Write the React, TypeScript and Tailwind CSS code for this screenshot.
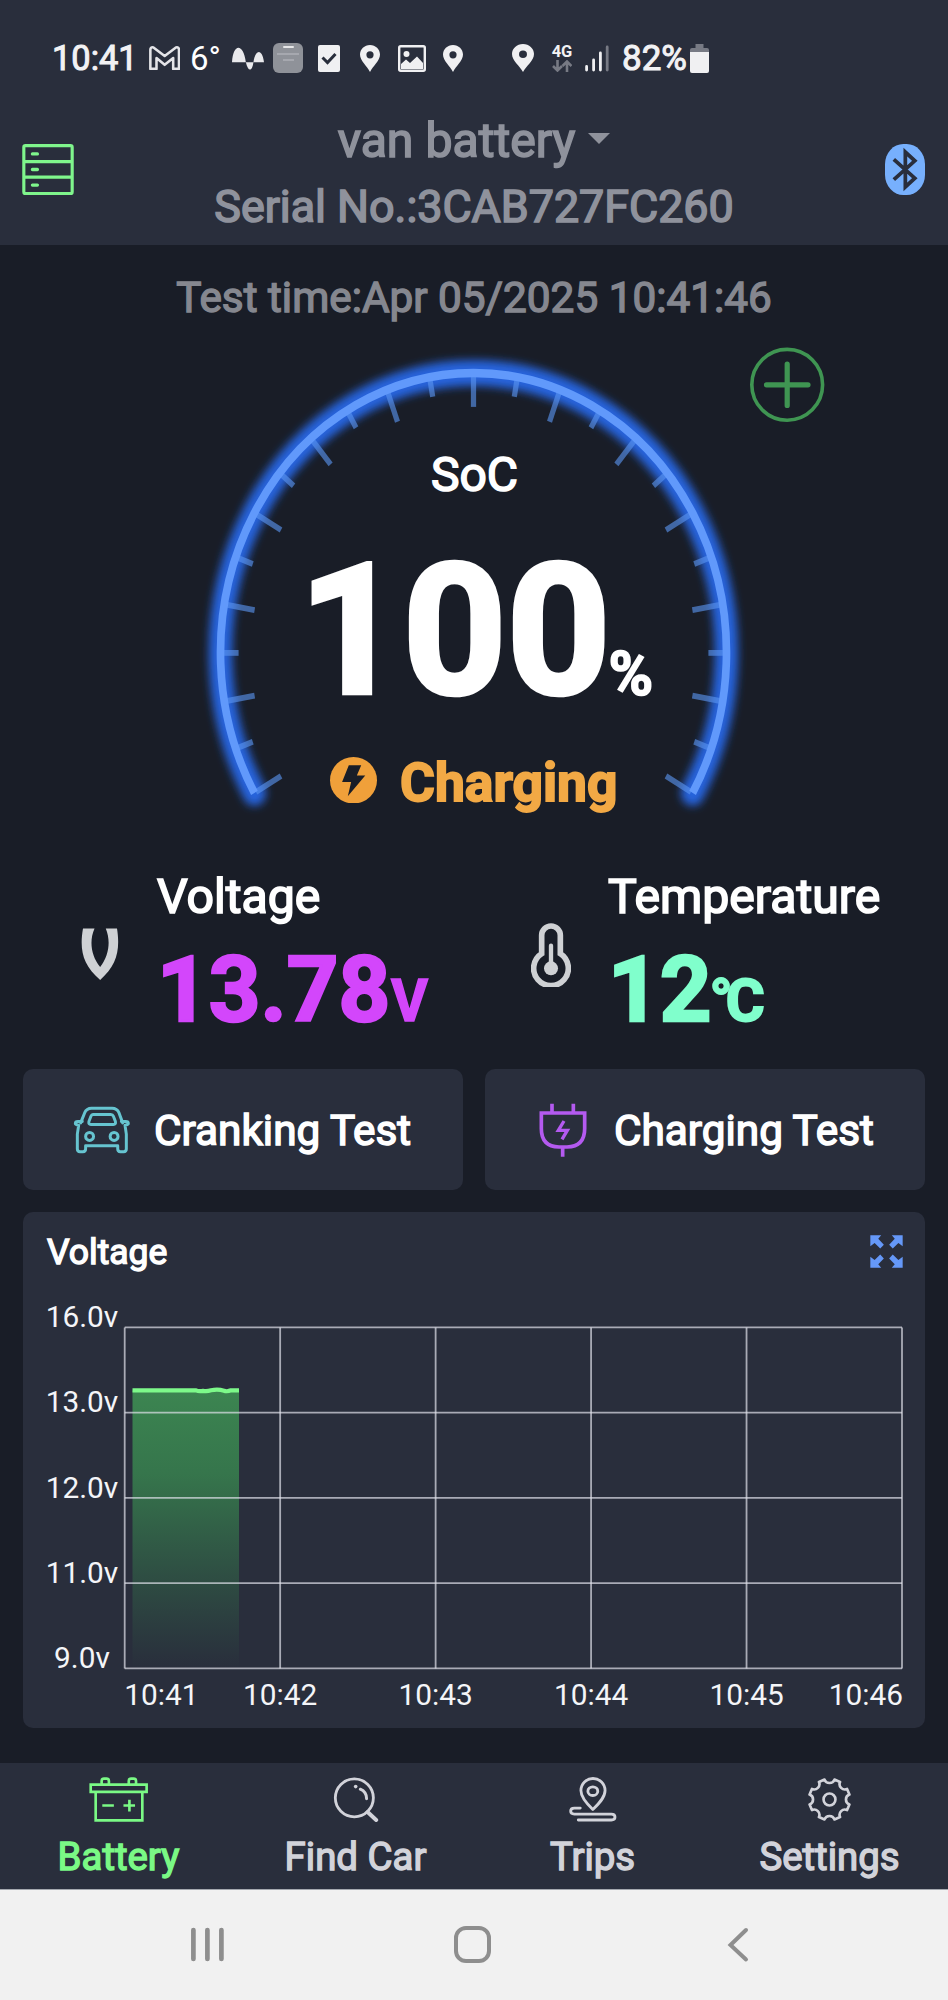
import React from 'react';

const Y_LABELS = ['16.0v', '13.0v', '12.0v', '11.0v', '9.0v'];
const X_LABELS = ['10:41', '10:42', '10:43', '10:44', '10:45', '10:46'];

const CHART = { left: 124.7, right: 902, top: 1327.4, bottom: 1668.4 };

// Angles in degrees, 0 is straight up
const TICKS = Array.from({ length: 25 }, (_, i) => ({ angle: -120 + i * 10, long: i % 2 === 0 }));

function polar(cx: number, cy: number, r: number, deg: number) {
  const a = (deg * Math.PI) / 180;
  return `${(cx + r * Math.sin(a)).toFixed(2)} ${(cy - r * Math.cos(a)).toFixed(2)}`;
}

function gearPath(cx: number, cy: number, r: number) {
  let d = '';
  for (let k = 0; k < 8; k++) {
    const a = k * 45;
    d += `${k === 0 ? 'M' : 'L'}${polar(cx, cy, r, a - 14)} A16 16 0 0 0 ${polar(cx, cy, r, a + 14)} `;
  }
  return d + 'Z';
}

function Pin({ className }: { className: string }) {
  return (
    <svg viewBox="0 0 20 27" preserveAspectRatio="none" className={className} fill="#f0f0f2">
      <path fillRule="evenodd" d="M10 0C4.4 0 0 4.3 0 9.6C0 16 7 21 10 27C13 21 20 16 20 9.6C20 4.3 15.6 0 10 0ZM10 6.2A3.6 3.6 0 1 1 10 13.4A3.6 3.6 0 1 1 10 6.2Z" />
    </svg>
  );
}

function StatusBar() {
  return (
    <div className="flex h-[94px] items-center pt-[22px] pl-[52px] text-[35px] leading-none text-[#f2f2f4]">
      <span className="w-[97px] text-[34.4px] [-webkit-text-stroke:1px]">10:41</span>
      <svg viewBox="448 75 91 70" className="h-[24px] w-[31px]" fill="none" stroke="#e4e4e8" strokeWidth="7.5" strokeLinejoin="round">
        <path d="M452 142V86Q452 77 461 79L494 104L527 79Q536 77 536 86V142H519V110L494 130L470 110V142Z" />
      </svg>
      <span className="ml-[10px] w-[42px] text-[33px] font-normal text-white">6°</span>
      <svg viewBox="693 78 97 68" className="h-[23px] w-[32px]" fill="#e9e9ec">
        <path d="M693 123C697 65 727 65 735 123ZM735 123H758C754 153 742 153 735 123ZM758 123C764 82 785 82 790 123Z" />
      </svg>
      <div className="ml-[9px] flex h-[30px] w-[30px] flex-col items-center rounded-md bg-[#8f9299] pt-[3px]">
        <div className="h-[2px] w-[11px] rounded bg-[#e6e6e8]" />
        <div className="mt-[5px] h-[2px] w-[22px] bg-[#a6a8af]" />
        <div className="mt-[4px] h-[2px] w-[11px] bg-[#a6a8af]" />
      </div>
      <svg viewBox="0 0 22 27" className="ml-[15px] h-[27px] w-[22px]">
        <rect width="22" height="27" rx="2" fill="#f0f0f2" />
        <path d="M4.5 12.5L9.5 17.5L17.5 9" fill="none" stroke="#292e3c" strokeWidth="3" />
      </svg>
      <Pin className="ml-[20px] h-[27px] w-[20px]" />
      <svg viewBox="0 0 28 27" className="ml-[18px] h-[27px] w-[28px]">
        <rect x="1.2" y="1.2" width="25.6" height="24.6" rx="1.5" fill="none" stroke="#f0f0f2" strokeWidth="2.4" />
        <circle cx="8.5" cy="9" r="3" fill="#f0f0f2" />
        <path d="M3 19L8 14.5L12 18L19 11.5L25 18V24H3Z" fill="#f0f0f2" />
      </svg>
      <Pin className="ml-[17px] h-[27px] w-[20px]" />
      <Pin className="ml-[49px] h-[28px] w-[22px]" />
      <div className="ml-[17px] flex w-[22px] flex-col items-center">
        <span className="text-[16.5px] font-bold">4G</span>
        <svg viewBox="0 0 20 12" className="h-[12px] w-[20px]" fill="none" stroke="#777a84" strokeWidth="2.6">
          <path d="M5.5 0V10M1 6L5.5 10.5L10 6M15 12V2M10.5 6L15 1.5L19.5 6" />
        </svg>
      </div>
      <svg viewBox="0 0 24 27" className="ml-[12px] h-[27px] w-[24px]" strokeWidth="2.8" strokeLinecap="round">
        <path d="M1.6 21.5V25M8.6 15V25M15.4 8V25" stroke="#f0f0f2" />
        <path d="M22.2 2V25" stroke="#777a84" />
      </svg>
      <span className="ml-[13px] w-[68px] [-webkit-text-stroke:1px]">82%</span>
      <svg viewBox="0 0 19 29" className="h-[29px] w-[19px]">
        <path d="M5.5 0H13.5V4H17Q19 4 19 6V9H0V6Q0 4 2 4H5.5Z" fill="#777a84" />
        <path d="M0 8H19V27Q19 29 17 29H2Q0 29 0 27Z" fill="#f0f0f2" />
      </svg>
    </div>
  );
}

function Header() {
  return (
    <header className="h-[245px] bg-[#292e3c]">
      <StatusBar />
      <div className="flex h-[151px] items-center justify-between pr-[23px] pl-[22px]">
        <svg viewBox="67 371 156 154" className="h-[51px] w-[52px]" fill="none" stroke="#7ff58c" strokeWidth="9.5">
          <rect x="72" y="376" width="146" height="145" rx="5" />
          <path d="M72 424H218M72 471H218" />
          <path d="M98 401H113M98 448H113M98 495H113" strokeWidth="10" strokeLinecap="round" />
        </svg>
        <div className="flex flex-col items-center pt-[9px] pr-[11px] text-[#8f929c]">
          <div className="flex h-[66px] items-center gap-[13px]">
            <span className="text-[48.2px] leading-none [-webkit-text-stroke:1.6px]">van battery</span>
            <svg viewBox="0 0 22 11" className="mb-[6px] h-[11px] w-[22px]" fill="currentColor">
              <path d="M0 0H22L11 11Z" />
            </svg>
          </div>
          <div className="flex h-[66px] items-center">
            <span className="text-[44.8px] leading-none [-webkit-text-stroke:1.6px]">Serial No.:3CAB727FC260</span>
          </div>
        </div>
        <svg viewBox="1234 372 118 152" preserveAspectRatio="none" className="h-[51px] w-[40px]">
          <rect x="1234" y="372" width="118" height="152" rx="54" ry="60" fill="#77b0fd" />
          <path d="M1260 418L1322 474L1294 500V396L1322 422L1260 478" fill="none" stroke="#292e3c" strokeWidth="11" />
        </svg>
      </div>
    </header>
  );
}

function Gauge() {
  const arc = `M${polar(0, 0, 280, -120)} A280 280 0 1 1 ${polar(0, 0, 280, 120)}`;
  return (
    <section className="grid h-[500px]">
      <svg viewBox="0 346 948 500" className="col-start-1 row-start-1 h-[500px] w-[948px] overflow-visible" fill="none">
        <defs>
          <filter id="glow" x="-20%" y="-20%" width="140%" height="140%">
            <feGaussianBlur stdDeviation="4.5" />
          </filter>
        </defs>
        <g transform="translate(473.5 652.9) scale(0.9035 1)">
          <path d={arc} stroke="#2563dc" strokeWidth="26" strokeLinecap="round" filter="url(#glow)" />
          {TICKS.map((t) => (
            <path
              key={t.angle}
              d={`M${polar(0, 0, 278, t.angle)} L${polar(0, 0, t.long ? 246 : 260, t.angle)}`}
              stroke="#5b95f0"
              strokeOpacity="0.62"
              strokeWidth="5.8"
            />
          ))}
          <path d={arc} stroke="#6199fb" strokeWidth="8.5" />
        </g>
        <g stroke="#3f9552" strokeLinecap="round">
          <circle cx="787.2" cy="384.8" r="35.4" strokeWidth="3.6" />
          <path d="M766.5 384.8H808M787.2 364.2V405.5" strokeWidth="5.2" />
        </g>
      </svg>
      <div className="col-start-1 row-start-1 flex flex-col pt-[99px]">
        <div className="flex h-[60px] items-center justify-center">
          <span className="pl-px text-[48px] leading-none text-white [-webkit-text-stroke:1.6px]">SoC</span>
        </div>
        <div className="mt-[31px] flex h-[190px] items-baseline pl-[299px] font-bold text-white">
          <span className="text-[181px] leading-[190px] [-webkit-text-stroke:4.5px]">100</span>
          <span className="-ml-[2px] translate-y-[2px] text-[60.5px] leading-none [-webkit-text-stroke:1.6px]">%</span>
        </div>
        <div className="mt-[31px] flex h-[50px] items-center pl-[330px]">
          <svg viewBox="510 1390 140 130" preserveAspectRatio="none" className="mb-[4px] h-[46.5px] w-[47px]">
            <ellipse cx="580" cy="1455" rx="70" ry="65" fill="#f0a03a" />
            <path d="M566 1413H603L590 1442H615L563 1500L573 1460H546Z" fill="#191d27" />
          </svg>
          <span className="mt-[2px] ml-[23px] text-[53.4px] leading-none font-bold text-[#f2a945] [-webkit-text-stroke:1.8px]">Charging</span>
        </div>
      </div>
    </section>
  );
}

function Readings() {
  return (
    <section className="grid h-[223px] grid-cols-2 px-[23px]">
      <div className="flex">
        <div className="flex w-[134px] justify-center pt-[82px] pl-5">
          <svg viewBox="243 233 115 157" className="h-[52px] w-[38px]" fill="#cfd1d4">
            <path d="M249 234H284C268 270 272 315 301 351C329 315 333 270 318 234H352C362 300 352 345 301 390C248 345 238 300 249 234Z" />
          </svg>
        </div>
        <div className="pt-[24px]">
          <div className="flex h-[54px] items-center text-white">
            <span className="text-[48.2px] leading-none [-webkit-text-stroke:1.7px]">Voltage</span>
          </div>
          <div className="mt-[21px] flex h-[90px] items-baseline font-bold text-[#d346fb]">
            <span className="text-[90.2px] leading-[90px] [-webkit-text-stroke:2.6px]">13.78</span>
            <span className="ml-[1px] origin-left scale-x-[0.96] text-[59px] leading-none [-webkit-text-stroke:1.5px]">V</span>
          </div>
        </div>
      </div>
      <div className="flex">
        <div className="flex w-[134px] justify-center pt-[77px] pl-5">
          <svg viewBox="172 218 120 192" className="h-[64px] w-[40px]" fill="none" stroke="#cfd1d4">
            <path d="M204 310V255A28 28 0 0 1 260 255V310A52 52 0 1 1 204 310Z" strokeWidth="17" />
            <path d="M232 286V340" strokeWidth="13" strokeLinecap="round" />
            <circle cx="232" cy="354" r="21" fill="#cfd1d4" stroke="none" />
          </svg>
        </div>
        <div className="pt-[24px]">
          <div className="flex h-[54px] items-center text-white">
            <span className="text-[48.2px] leading-none [-webkit-text-stroke:1.7px]">Temperature</span>
          </div>
          <div className="mt-[21px] flex h-[90px] items-baseline font-bold text-[#80ffcc]">
            <span className="text-[90.2px] leading-[90px] [-webkit-text-stroke:2.6px]">12</span>
            <span className="-ml-[2px] text-[59.5px] leading-none tracking-[-7px] [-webkit-text-stroke:2px]">°C</span>
          </div>
        </div>
      </div>
    </section>
  );
}

function Actions() {
  return (
    <section className="grid grid-cols-2 gap-[22px] px-[23px] text-white">
      <div className="flex h-[121px] items-center rounded-[10px] bg-[#292e3c] pl-[50px]">
        <svg viewBox="40 75 175 145" className="h-[48px] w-[58px]" fill="none" stroke="#66c4d0" strokeWidth="9" strokeLinecap="round" strokeLinejoin="round">
          <path d="M63 126L75 96Q81 82 96 82H158Q173 82 179 96L190 126" />
          <path d="M68 122H55Q47 122 47 128Q47 132 57 133L53 160V205Q53 213 61 213H70Q78 213 78 205V195H175V205Q175 213 183 213H193Q201 213 201 205V160L197 133Q207 132 207 128Q207 122 199 122H186" />
          <path d="M100 101H154Q160 101 162 106L168 122Q170 131 162 131H94Q86 131 88 122L94 106Q96 101 100 101Z" />
          <circle cx="90" cy="167" r="12" />
          <circle cx="164" cy="167" r="12" />
        </svg>
        <span className="mt-[4px] ml-[23px] text-[42.3px] leading-none [-webkit-text-stroke:1.5px]">Cranking Test</span>
      </div>
      <div className="flex h-[121px] items-center rounded-[10px] bg-[#292e3c] pl-[54px]">
        <svg viewBox="196 758 144 162" className="h-[54px] w-[48px]" fill="none" stroke="#b45af0" strokeWidth="11">
          <path d="M235 760V788M299 760V788M203 788H333V835Q333 888 280 890H256Q203 888 203 835ZM267 890V919" />
          <path d="M271 812L254 840H281L265 867" strokeWidth="10" />
        </svg>
        <span className="mt-[4px] ml-[27px] text-[42.3px] leading-none [-webkit-text-stroke:1.5px]">Charging Test</span>
      </div>
    </section>
  );
}

function ExpandIcon() {
  const arrow = 'M-49 -47H-16L-25 -37L-8 -20L-19 -9L-36 -25L-49 -15Z';
  return (
    <svg viewBox="-50 -48 100 96" preserveAspectRatio="none" className="mb-[2px] h-[33px] w-[33px]" fill="#6598f8">
      <path d={arrow} />
      <path d={arrow} transform="scale(-1 1)" />
      <path d={arrow} transform="scale(1 -1)" />
      <path d={arrow} transform="scale(-1 -1)" />
    </svg>
  );
}

function VoltageChart() {
  const { left, right, top, bottom } = CHART;
  const rowH = (bottom - top) / 4;
  const colW = (right - left) / 5;
  return (
    <section className="mx-[23px] mt-[22px] h-[516px] rounded-[10px] bg-[#292e3c]">
      <div className="flex h-[78px] items-center justify-between pt-[2px] pr-[22px] pl-[24px]">
        <span className="mt-[2px] text-[35.5px] leading-none text-white [-webkit-text-stroke:1.4px]">Voltage</span>
        <ExpandIcon />
      </div>
      <svg viewBox="23 1290 902 438" className="h-[438px] w-[902px]">
        <defs>
          <linearGradient id="area" x1="0" y1="0" x2="0" y2="1">
            <stop offset="0" stopColor="#4fdc66" stopOpacity="0.5" />
            <stop offset="0.3" stopColor="#46d060" stopOpacity="0.44" />
            <stop offset="1" stopColor="#3fc05a" stopOpacity="0" />
          </linearGradient>
        </defs>
        <path d={`M132.5 1390.4H239V${bottom}H132.5Z`} fill="url(#area)" />
        <g stroke="#dfe1ea" strokeOpacity="0.7" strokeWidth="1.8">
          {Y_LABELS.map((l, i) => (
            <line key={l} x1={left} x2={right} y1={top + i * rowH} y2={top + i * rowH} />
          ))}
          {X_LABELS.map((l, i) => (
            <line key={l} x1={left + i * colW} x2={left + i * colW} y1={top} y2={bottom} />
          ))}
        </g>
        <path d="M132.5 1390.4H196Q199 1391.7 203 1390.9Q207 1391.7 211 1390.3Q218 1388.9 224 1390.7Q227 1392 231 1390.3H239" fill="none" stroke="#7df98a" strokeWidth="4.2" />
        <g fill="#f4f5f8" fontSize="29.8">
          {Y_LABELS.map((l, i) => (
            <text key={l} x="82" y={top + i * rowH - 0.3} textAnchor="middle">{l}</text>
          ))}
          {X_LABELS.map((l, i) => (
            <text
              key={l}
              x={i === 0 ? left - 0.5 : i === 5 ? right + 1 : left + i * colW}
              y="1704.8"
              textAnchor={i === 0 ? 'start' : i === 5 ? 'end' : 'middle'}
            >
              {l}
            </text>
          ))}
        </g>
      </svg>
    </section>
  );
}

function Tab({ label, active, children }: { label: string; active?: boolean; children: React.ReactNode }) {
  return (
    <div className={`flex flex-col items-center pt-[14px] ${active ? 'text-[#7af985]' : 'text-[#d2d3da]'}`}>
      {children}
      <span className="mt-[15px] text-[38.4px] leading-[40px] [-webkit-text-stroke:1.4px]">{label}</span>
    </div>
  );
}

function TabBar() {
  return (
    <nav className="mt-[35px] grid h-[126px] grid-cols-4 bg-[#292e3c]">
      <Tab label="Battery" active>
        <svg viewBox="266 82 178 136" className="h-[45px] w-[59px]" fill="none" stroke="currentColor" strokeWidth="8">
          <path d="M271 105H440V127H271ZM286 127V213H427V127M304 105V94Q304 87 311 87H319Q326 87 326 94V105M386 105V94Q386 87 393 87H401Q408 87 408 94V105M306 168H341M370 168H405M388 151V186" />
        </svg>
      </Tab>
      <Tab label="Find Car">
        <svg viewBox="998 82 138 136" className="h-[45px] w-[46px]" fill="none" stroke="currentColor" strokeWidth="8.5" strokeLinecap="round">
          <circle cx="1062" cy="145" r="57.5" />
          <path d="M1102 188L1128 212" strokeWidth="12" />
          <path d="M1080 119Q1099 127 1099 148" strokeWidth="9" />
          <circle cx="1066" cy="111" r="5.5" fill="currentColor" stroke="none" />
        </svg>
      </Tab>
      <Tab label="Trips">
        <svg viewBox="282 82 146 136" className="h-[45px] w-[49px]" fill="none" stroke="currentColor" strokeWidth="8.5" strokeLinecap="round" strokeLinejoin="round">
          <path d="M356 180C340 165 320 145 320 123A36.5 36.5 0 0 1 393 123C393 145 372 165 356 180Z" />
          <ellipse cx="356" cy="125" rx="15" ry="13" />
          <path d="M318 176H300Q289 176 289 185Q289 194 300 194H412Q423 194 423 203Q423 212 412 212H312" />
        </svg>
      </Tab>
      <Tab label="Settings">
        <svg viewBox="1000 83 136 136" className="h-[45px] w-[45px]" fill="none" stroke="currentColor" strokeWidth="8" strokeLinejoin="round">
          <path d={gearPath(1068, 151, 62)} />
          <circle cx="1068" cy="151" r="18" />
        </svg>
      </Tab>
    </nav>
  );
}

function SystemNav() {
  return (
    <div className="flex h-[111px] items-start border-t border-[#a3a7ae] bg-[#f1f1f1] pt-[36px] pl-[191px]">
      <svg viewBox="0 0 33 37" className="h-[37px] w-[33px]" stroke="#8e8e8e" strokeWidth="4.7" strokeLinecap="round">
        <path d="M2.4 4V33M16.4 4V33M30.4 4V33" />
      </svg>
      <div className="ml-[230px] h-[37px] w-[37px] rounded-[12px] border-4 border-[#8e8e8e]" />
      <svg viewBox="0 0 22 37" className="ml-[236px] h-[37px] w-[22px]" fill="none" stroke="#8e8e8e" strokeWidth="4" strokeLinecap="round">
        <path d="M19 4L3.5 19L19 33.5" />
      </svg>
    </div>
  );
}

export default function App() {
  return (
    <div className="w-[948px] h-[2000px] overflow-hidden bg-[#191d27] font-['Roboto',sans-serif]">
      <Header />
      <div className="flex h-[101px] items-center justify-center pt-[6px] text-[#85878f]">
        <span className="text-[42.3px] leading-none [-webkit-text-stroke:1.4px]">Test time:Apr 05/2025 10:41:46</span>
      </div>
      <Gauge />
      <Readings />
      <Actions />
      <VoltageChart />
      <TabBar />
      <SystemNav />
    </div>
  );
}
